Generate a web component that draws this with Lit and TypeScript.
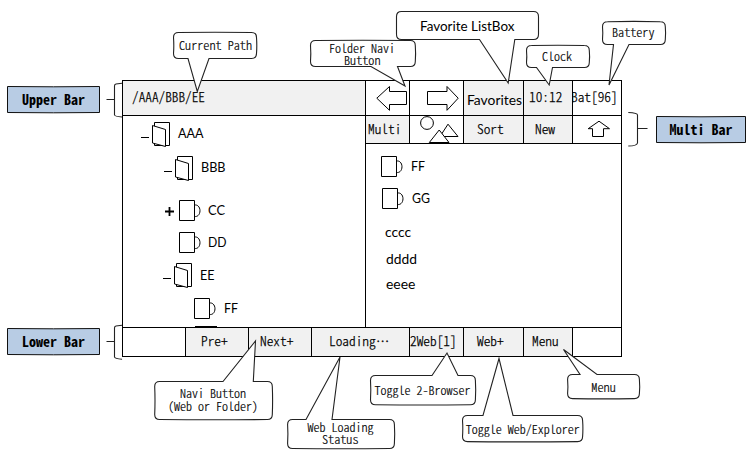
import { LitElement, html, svg, css } from "lit";
import { customElement } from "lit/decorators.js";

interface Cell {
  area: string;
  text?: string;
  tail?: string;
  pad?: number;
  width?: number;
  shaded?: boolean;
  kind?: string;
  icon?: unknown;
}

interface Row {
  height: number;
  indent: number;
  toggle?: "minus" | "plus";
  icon?: "open" | "closed";
  text?: string;
  gap?: number;
  width?: number;
  base?: number;
}

interface Line {
  x: number;
  y: number;
  w: number;
  text: string;
}

interface Callout {
  box: [number, number, number, number];
  tail: [number, number, number, number];
  up?: boolean;
  plain?: boolean;
  lines: Line[];
}

const label = (text: string, width: number, kind = "mono", base = 12) => html`
  <svg class="label" width=${width} height="18">
    <text class=${kind} x="0" y=${base} textLength=${width} lengthAdjust="spacingAndGlyphs">${text}</text>
  </svg>`;

const arrowLeft = html`<svg class="fill" viewBox="366 81 43 34">
  <path d="M376.8 98.2L389.5 86.5V91.5H406.5V104.5H389.5V110.3Z" /></svg>`;
const arrowRight = html`<svg class="fill" viewBox="410 81 53 34">
  <path d="M458.2 98.2L447 86.5V91.5H427.5V104.5H447V110.3Z" /></svg>`;
const arrowUp = html`<svg class="fill" viewBox="573 116 48 27">
  <path d="M599 121.2L609.5 128.7H603.5V136.5H592.5V128.7H588.2Z" /></svg>`;
const picture = html`<svg class="fill" viewBox="410 116 53 27">
  <circle cx="427" cy="123" r="6.4" />
  <path d="M448 124.2L458 136.5H440Z" />
  <path d="M439.2 130L449 142.5H429.3Z" /></svg>`;

const upperCells: Cell[] = [
  { area: "path", text: "/AAA/BBB/EE", pad: 9, width: 73, shaded: true },
  { area: "back", icon: arrowLeft },
  { area: "forward", icon: arrowRight },
  { area: "fav", text: "Favorites", pad: 3, width: 55, shaded: true, kind: "sans" },
  { area: "clock", text: "10:12", pad: 5, width: 33.3, shaded: true },
  { area: "bat", text: "Bat[96]", pad: -2, width: 46.7 },
  { area: "multi", text: "Multi", pad: 2, width: 33.3, shaded: true },
  { area: "pic", icon: picture },
  { area: "sort", text: "Sort", pad: 13, width: 26.7, shaded: true },
  { area: "new", text: "New", pad: 11, width: 20, shaded: true },
  { area: "up", icon: arrowUp },
];

const lowerCells: Cell[] = [
  { area: "l0" },
  { area: "l1", text: "Pre+", pad: 15, width: 26.7, shaded: true },
  { area: "l2", text: "Next+", pad: 11, width: 33.3, shaded: true },
  { area: "l3", text: "Loading", tail: "…", pad: 17, width: 46.7, shaded: true },
  { area: "l4", text: "2Web[1]", pad: 0, width: 46.7, shaded: true },
  { area: "l5", text: "Web+", pad: 13, width: 26.7, shaded: true },
  { area: "l6", text: "Menu", pad: 8, width: 26.7, shaded: true },
  { area: "l7" },
];

const tree: Row[] = [
  { height: 34, indent: 18, toggle: "minus", icon: "open", text: "AAA", gap: 8, width: 25.5, base: 16 },
  { height: 44, indent: 41, toggle: "minus", icon: "open", text: "BBB", gap: 8, width: 24.5, base: 16 },
  { height: 32, indent: 42, toggle: "plus", icon: "closed", text: "CC", gap: 7, width: 17, base: 15 },
  { height: 31, indent: 42, icon: "closed", text: "DD", gap: 7, width: 18.5, base: 15 },
  { height: 35, indent: 40, toggle: "minus", icon: "open", text: "EE", gap: 8, width: 14.5, base: 16.5 },
  { height: 28, indent: 57, icon: "closed", text: "FF", gap: 8, width: 14, base: 15 },
];

const files: Row[] = [
  { height: 32, indent: 15, icon: "closed", text: "FF", gap: 8, width: 14, base: 15 },
  { height: 33, indent: 16, icon: "closed", text: "GG", gap: 8, width: 18, base: 15 },
  { height: 27, indent: 19, text: "cccc", width: 26, base: 16 },
  { height: 25, indent: 20, text: "dddd", width: 31, base: 16 },
  { height: 22, indent: 20, text: "eeee", width: 29.5, base: 16 },
];

const callouts: Callout[] = [
  { box: [173.5, 32.5, 256.5, 58.5], tail: [188, 209, 197.3, 91.5], lines: [{ x: 179, y: 50, w: 73, text: "Current Path" }] },
  { box: [396.5, 11.5, 538.5, 39.5], tail: [479.5, 514.8, 508.2, 83], plain: true, lines: [{ x: 420, y: 31, w: 94.5, text: "Favorite ListBox" }] },
  {
    box: [310.5, 40.5, 415.3, 66.5], tail: [371, 397.5, 405, 86],
    lines: [{ x: 329, y: 52.5, w: 66, text: "Folder Navi" }, { x: 344, y: 65, w: 36.5, text: "Button" }],
  },
  { box: [526.5, 45.5, 589.3, 67.5], tail: [536.5, 552.5, 549.2, 85], lines: [{ x: 542, y: 61, w: 30, text: "Clock" }] },
  { box: [602.5, 21.7, 665.3, 44.5], tail: [613.5, 629, 609, 85], lines: [{ x: 612, y: 37, w: 42.5, text: "Battery" }] },
  {
    box: [154.7, 381.5, 272.3, 419.5], tail: [223, 253.3, 255.5, 341], up: true,
    lines: [{ x: 180, y: 398, w: 66, text: "Navi Button" }, { x: 168, y: 411, w: 90, text: "(Web or Folder)" }],
  },
  {
    box: [287.6, 419.5, 394.4, 448.5], tail: [306, 332, 340, 357], up: true,
    lines: [{ x: 307.5, y: 431.5, w: 66, text: "Web Loading" }, { x: 322, y: 444, w: 36.5, text: "Status" }],
  },
  { box: [370.5, 375.5, 475.4, 404.7], tail: [432, 458, 447, 353], up: true, lines: [{ x: 374.5, y: 394.5, w: 96, text: "Toggle 2-Browser" }] },
  { box: [462.5, 415.5, 582.6, 441.6], tail: [483, 513, 499, 358.5], up: true, lines: [{ x: 465.7, y: 433.5, w: 114, text: "Toggle Web/Explorer" }] },
  { box: [567.6, 374.5, 639.4, 398.6], tail: [580, 597, 563.5, 349.5], up: true, lines: [{ x: 591.3, y: 391.5, w: 24.5, text: "Menu" }] },
];

const tags = [
  { x: 7.5, y: 86.5, w: 92, h: 26, tx: 22, ty: 105, text: "Upper Bar" },
  { x: 7.5, y: 328.5, w: 92, h: 26, tx: 22, ty: 347, text: "Lower Bar" },
  { x: 656.5, y: 116.5, w: 89, h: 26, tx: 669.5, ty: 135, text: "Multi Bar" },
];

/* Rounded speech bubble; the side opposite the tail bows slightly outward. */
function bubble({ box: [l, t, r, b], tail: [a, c, tx, ty], up, plain }: Callout): string {
  const k = 5;
  const bow = plain ? 0 : 0.6;
  const m = (l + r) / 2;
  const v = (t + b) / 2;
  const top = up ? `L${a} ${t}L${tx} ${ty}L${c} ${t}L${r - k} ${t}` : `Q${m} ${t - bow} ${r - k} ${t}`;
  const bottom = up ? `Q${m} ${b + bow} ${l + k} ${b}` : `L${c} ${b}L${tx} ${ty}L${a} ${b}L${l + k} ${b}`;
  return `M${l + k} ${t}${top}Q${r} ${t} ${r} ${t + k}Q${r + bow} ${v} ${r} ${b - k}` +
    `Q${r} ${b} ${r - k} ${b}${bottom}Q${l} ${b} ${l} ${b - k}Q${l + bow} ${v} ${l} ${t + k}Q${l} ${t} ${l + k} ${t}Z`;
}

@customElement("app-root")
export class AppRoot extends LitElement {
  static styles = css`
    :host {
      display: block;
      position: relative;
      width: 755px;
      height: 469px;
      box-sizing: border-box;
      padding: 80px 0 0 122px;
      background: #fff;
      overflow: hidden;
      color: #000;
    }
    .device {
      display: grid;
      width: 500px;
      height: 277px;
      box-sizing: border-box;
      border: solid #000;
      border-width: 0 1px 1px 0;
      grid-template-columns: 63px 63px 63px 54px 44px 54px 60px 49px 49px;
      grid-template-rows: 35px 28px 184px 29px;
      grid-template-areas:
        "path path path path back forward fav clock bat"
        "tree tree tree tree multi pic sort new up"
        "tree tree tree tree files files files files files"
        "l0 l1 l2 l3 l3 l4 l5 l6 l7";
    }
    .cell {
      display: flex;
      align-items: center;
      box-sizing: border-box;
      min-width: 0;
      min-height: 0;
      border: solid #000;
      border-width: 1px 0 0 1px;
      overflow: hidden;
    }
    .shaded { background: #f1f1f1; }
    .label { display: block; flex: none; overflow: visible; }
    .fill { display: block; width: 100%; height: 100%; }
    svg { fill: #fff; stroke: #000; stroke-width: 1; }
    text { fill: #000; stroke: none; }
    .mono, .wide {
      font: 300 13.3px "Noto Sans CJK JP", sans-serif;
      font-feature-settings: "hwid";
      stroke: #000;
      stroke-width: 0.25px;
    }
    .wide { font-feature-settings: normal; }
    .note {
      font: 300 12px "Noto Sans CJK JP", sans-serif;
      font-feature-settings: "hwid";
      stroke: #000;
      stroke-width: 0.2px;
    }
    .tag {
      font: bold 14px "Noto Sans CJK JP", sans-serif;
      font-feature-settings: "hwid";
    }
    .sans { font: 13.4px Lato, sans-serif; }
    .list {
      box-sizing: border-box;
      border: solid #000;
      border-width: 1px 0 0 1px;
      overflow: hidden;
      min-height: 0;
    }
    .tree { grid-area: tree; padding-top: 6px; }
    .files { grid-area: files; padding-top: 12px; }
    .row { display: flex; align-items: flex-start; box-sizing: border-box; }
    .glyph { display: block; flex: none; overflow: visible; }
    .next { margin-left: 72px; }
    .notes { position: absolute; inset: 0; }
    .bubble { stroke: #222; stroke-width: 1.1; }
    .plate { fill: #b8cce4; stroke: #111; }
    .brace { fill: none; stroke: #222; stroke-width: 1.1; }
  `;

  private cell(c: Cell) {
    return html`<div class="cell ${c.shaded ? "shaded" : ""}" style="grid-area:${c.area}">
      ${c.icon ?? ""}
      ${c.text ? html`<div style="margin-left:${c.pad}px">${label(c.text, c.width!, c.kind, c.kind ? 16 : 13)}</div>` : ""}
      ${c.tail ? label(c.tail, 13.3, "wide", 13) : ""}
    </div>`;
  }

  private row(r: Row, withToggle: boolean) {
    return html`<div class="row" style="height:${r.height}px;padding-left:${r.indent}px">
      ${withToggle
        ? html`<svg class="glyph" width=${r.icon === "open" ? 11 : 14} height="24">
            ${r.toggle === "minus" ? svg`<path d="M0 15.5H8" />` : ""}
            ${r.toggle === "plus" ? svg`<path d="M0 11.5H9M4.5 7V16" stroke-width="1.8" />` : ""}
          </svg>`
        : ""}
      ${r.icon === "open"
        ? html`<svg class="glyph" width="18" height="25">
            <path d="M2.5 .5H17.5V23.5H2.5Z" /><path d="M.5 3.5L13.5 7.5V24.5L.5 21Z" />
          </svg>`
        : ""}
      ${r.icon === "closed"
        ? html`<svg class="glyph" width="22" height="21">
            <path d="M15.5 5C22.8 4 22.8 17.5 15.5 16.5" /><path d="M.5 .5H15.5V20.5H.5Z" />
          </svg>`
        : ""}
      ${r.text ? html`<div style="margin-left:${r.gap ?? 0}px">${label(r.text, r.width!, "sans", r.base)}</div>` : ""}
    </div>`;
  }

  render() {
    return html`
      <div class="device">
        ${upperCells.map((c) => this.cell(c))}
        <div class="list tree">
          ${tree.map((r) => this.row(r, true))}
          <svg class="glyph next" width="24" height="4"><path d="M0 .5H22M4 1H17" /></svg>
        </div>
        <div class="list files">${files.map((r) => this.row(r, false))}</div>
        ${lowerCells.map((c) => this.cell(c))}
      </div>
      <svg class="notes" width="755" height="469">
        <path class="brace" d="M122 83.3L116 84Q114.5 84.3 114.5 86V115Q114.8 116.5 122 117M106.5 99.5H114.5" />
        <path class="brace" d="M122 325.3L116 326Q114.5 326.3 114.5 328V357Q114.8 358.8 122 359.2M106.5 341.5H114.5" />
        <path class="brace" d="M628.3 112.5Q637.5 112.8 637.5 115V143Q637 146 628.3 146M637.5 128.5H647.5" />
        ${tags.map((g) => svg`
          <path class="plate" d="M${g.x} ${g.y}Q${g.x + g.w / 2} ${g.y + 0.6} ${g.x + g.w} ${g.y}V${g.y + g.h}Q${g.x + g.w / 2} ${g.y + g.h + 0.6} ${g.x} ${g.y + g.h}Z" />
          <text class="tag" x=${g.tx} y=${g.ty} textLength="63" lengthAdjust="spacingAndGlyphs">${g.text}</text>`)}
        ${callouts.map((c) => svg`
          <path class="bubble" d=${bubble(c)} />
          ${c.lines.map((l) => svg`<text class=${c.plain ? "sans" : "note"} x=${l.x} y=${l.y} textLength=${l.w} lengthAdjust="spacingAndGlyphs">${l.text}</text>`)}`)}
      </svg>`;
  }
}
